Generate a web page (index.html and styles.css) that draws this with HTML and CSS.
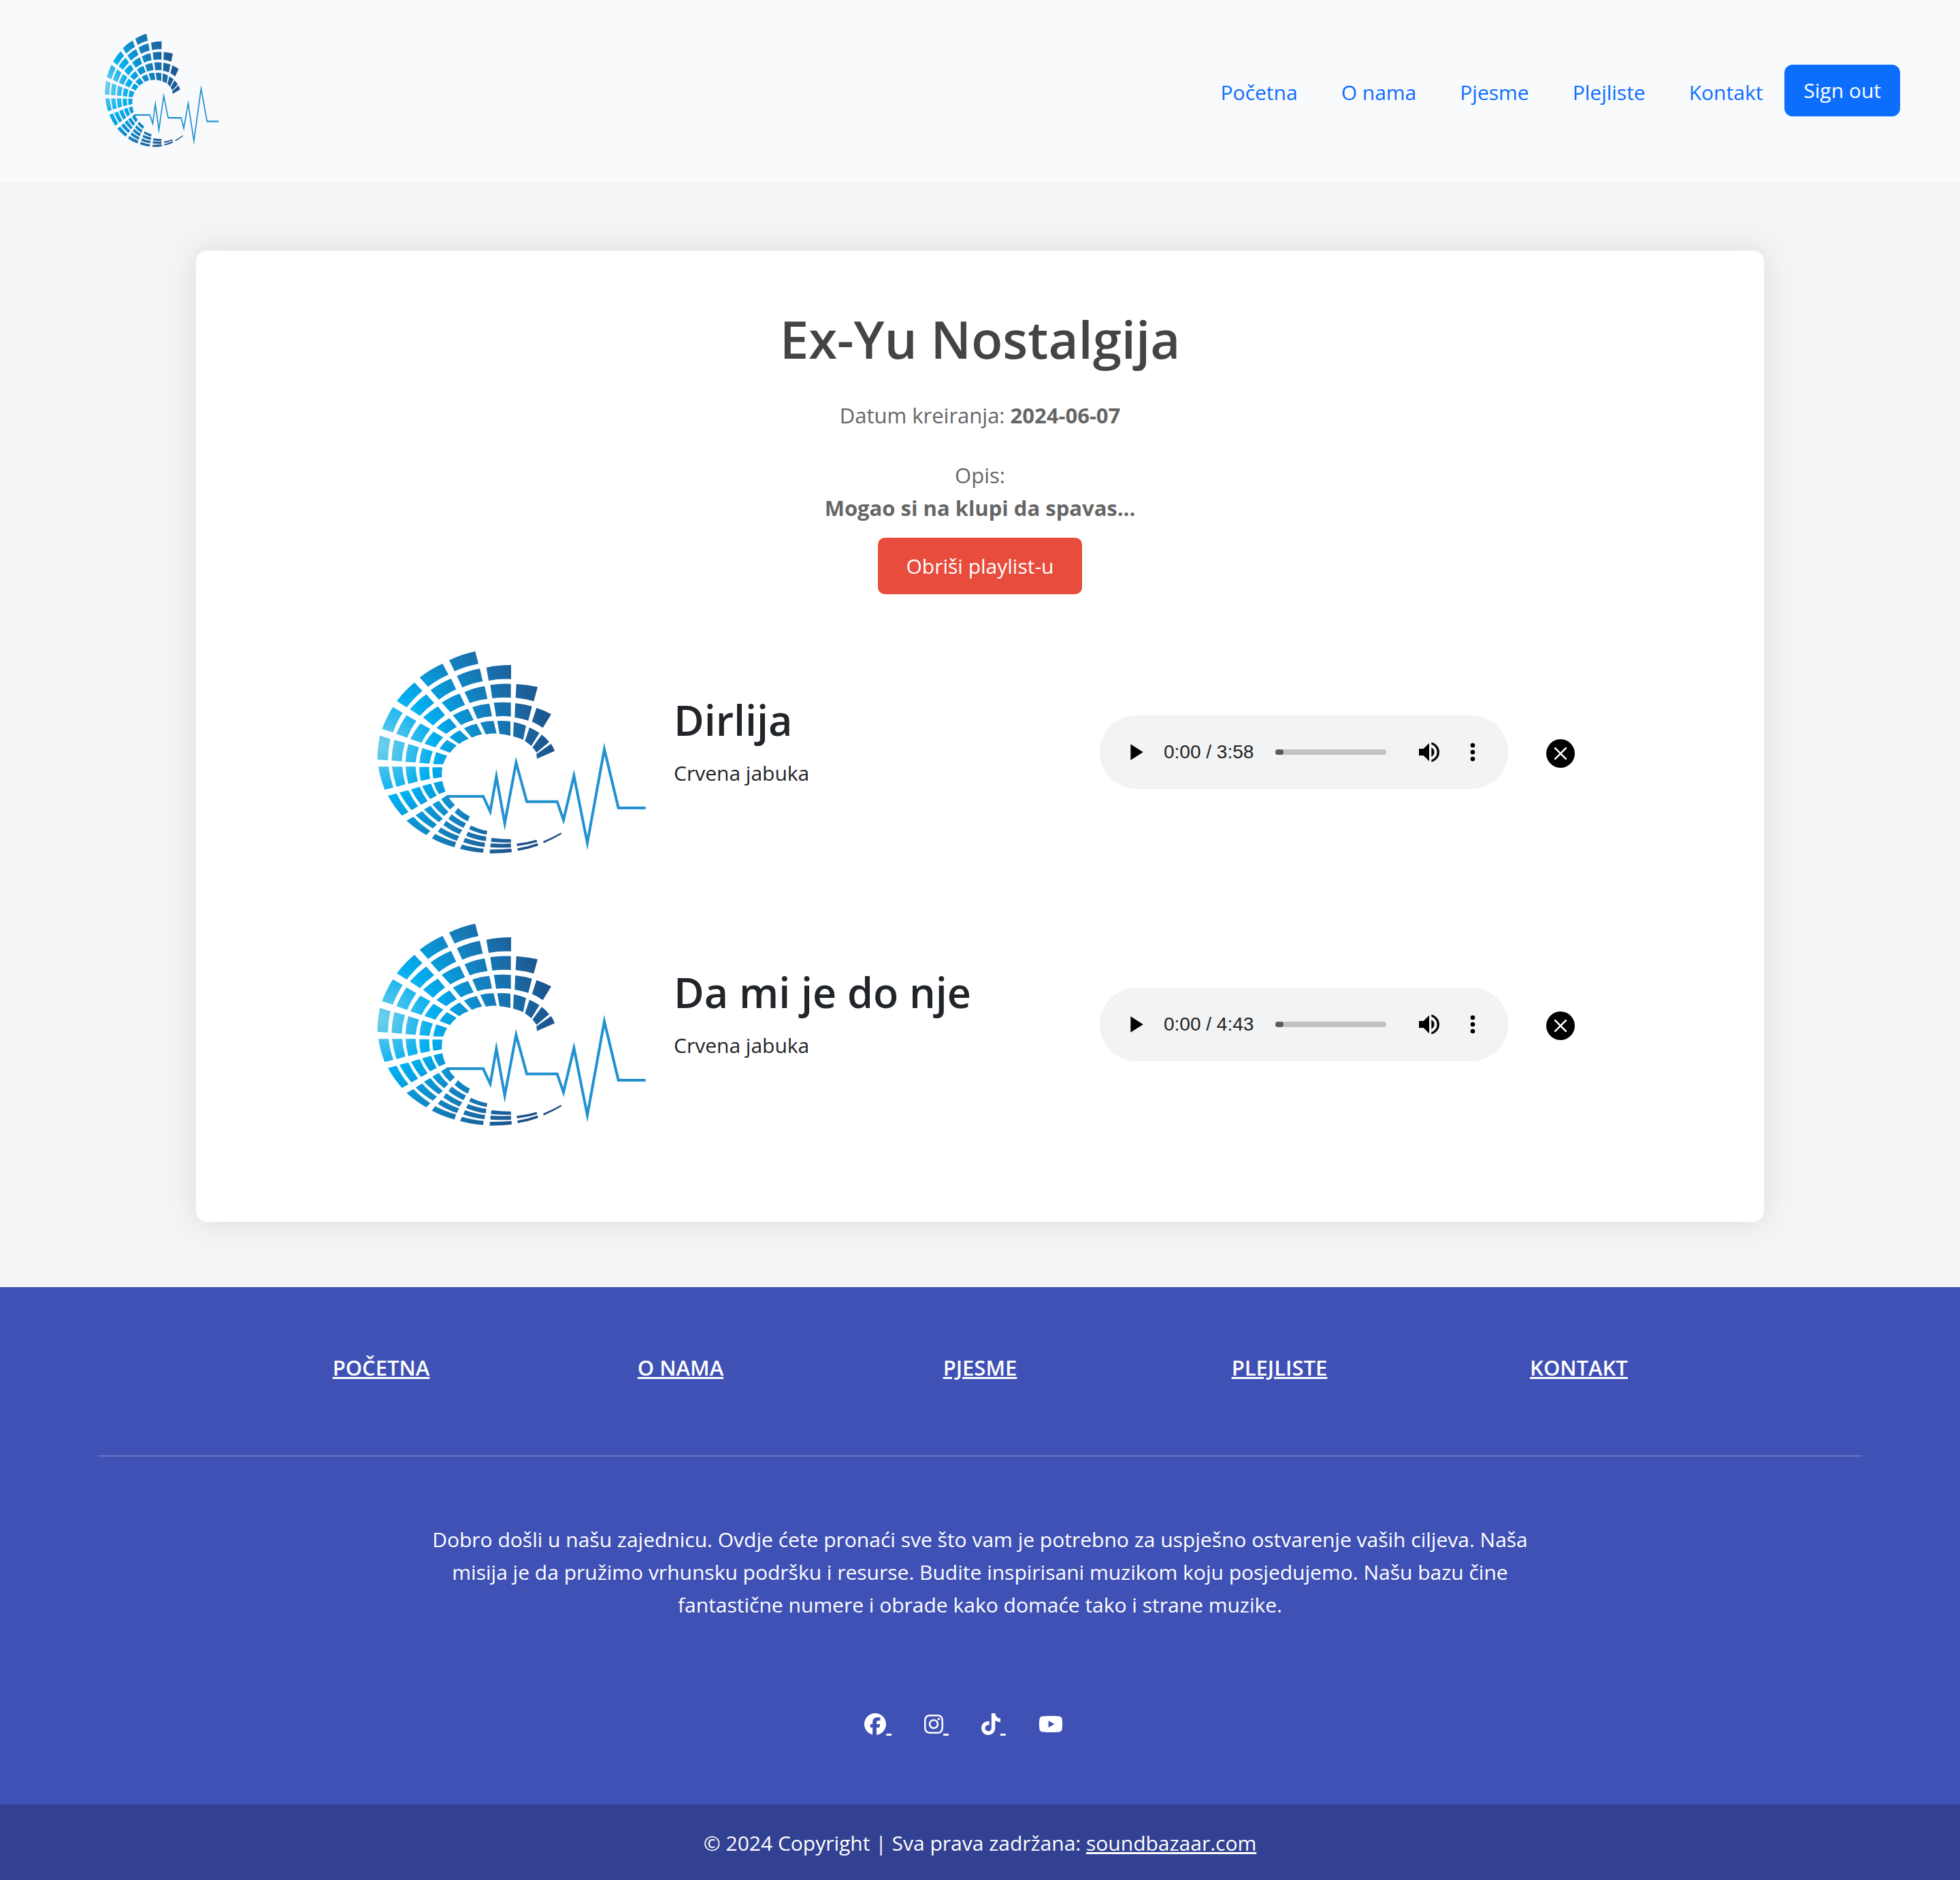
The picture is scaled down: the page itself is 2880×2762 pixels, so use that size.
FILE: index.html
```html
<!DOCTYPE html>
<html lang="bs">
<head>
<meta charset="utf-8">
<meta name="viewport" content="width=device-width, initial-scale=1">
<title>Ex-Yu Nostalgija</title>
<link rel="stylesheet" href="styles.css">
</head>
<body>
<svg class="sprite" width="0" height="0" aria-hidden="true">
  <defs>
    <radialGradient id="tile-fill" gradientUnits="userSpaceOnUse" cx="60" cy="465" r="800">
      <stop offset="0" stop-color="#6fcfea"/>
      <stop offset=".16" stop-color="#38bdee"/>
      <stop offset=".3" stop-color="#00aeef"/>
      <stop offset=".6" stop-color="#147fbd"/>
      <stop offset=".8" stop-color="#1b659f"/>
      <stop offset="1" stop-color="#1d4c88"/>
    </radialGradient>
    <g id="logo">
      <g fill="url(#tile-fill)">
        <path d="M44 528A470 470 0 0 1 55 422L101 437A430 430 0 0 0 90 531ZM106 532A410 410 0 0 1 118 441L165 454A370 370 0 0 0 151 536ZM167 538A350 350 0 0 1 180 459L227 473A310 310 0 0 0 212 541ZM229 542A290 290 0 0 1 241 477L288 491A250 250 0 0 0 273 546ZM290 548A220 220 0 0 1 303 495L351 511A180 180 0 0 0 334 548Z"/>
        <path d="M64 393A470 470 0 0 1 112 296L155 322A430 430 0 0 0 112 408ZM127 415A410 410 0 0 1 172 332L215 357A370 370 0 0 0 175 431ZM189 437A350 350 0 0 1 233 368L277 393A310 310 0 0 0 238 454ZM251 458A290 290 0 0 1 291 404L334 430A250 250 0 0 0 299 474ZM317 480A220 220 0 0 1 350 441L393 466A180 180 0 0 0 364 498Z"/>
        <path d="M129 270A470 470 0 0 1 207 188L242 225A430 430 0 0 0 173 298ZM187 306A410 410 0 0 1 259 240L294 278A370 370 0 0 0 231 335ZM245 342A350 350 0 0 1 310 293L342 332A310 310 0 0 0 289 378ZM304 388A290 290 0 0 1 361 345L394 384A250 250 0 0 0 347 415ZM361 430A220 220 0 0 1 406 398L446 436A180 180 0 0 0 404 459Z"/>
        <path d="M230 166A470 470 0 0 1 331 105L357 154A430 430 0 0 0 267 207ZM278 222A410 410 0 0 1 368 171L391 218A370 370 0 0 0 315 264ZM327 277A350 350 0 0 1 406 237L430 287A310 310 0 0 0 365 319ZM376 333A290 290 0 0 1 443 304L468 353A250 250 0 0 0 412 376ZM425 390A220 220 0 0 1 481 370L505 416A180 180 0 0 0 460 431Z"/>
        <path d="M360 90A470 470 0 0 1 475 51L489 106A430 430 0 0 0 384 139ZM394 159A410 410 0 0 1 495 127L508 183A370 370 0 0 0 418 210ZM428 230A350 350 0 0 1 516 204L529 260A310 310 0 0 0 451 279ZM462 297A290 290 0 0 1 537 281L549 337A250 250 0 0 0 484 349ZM497 365A220 220 0 0 1 556 358L569 413A180 180 0 0 0 522 417Z"/>
        <path d="M524 122A470 470 0 0 1 633 111L633 173A430 430 0 0 0 534 180ZM541 199A410 410 0 0 1 632 194L632 255A370 370 0 0 0 550 258ZM557 277A350 350 0 0 1 632 277L632 338A310 310 0 0 0 567 338ZM572 358A290 290 0 0 1 630 360L630 423A250 250 0 0 0 582 415Z"/>
        <path d="M656 195A470 470 0 0 1 750 208L733 271A430 430 0 0 0 653 256ZM651 280A410 410 0 0 1 725 293L709 356A370 370 0 0 0 649 342ZM645 362A350 350 0 0 1 699 379L686 441A310 310 0 0 0 642 425Z"/>
        <path d="M745 300A350 350 0 0 1 810 328L773 388A310 310 0 0 0 725 361ZM714 386A290 290 0 0 1 758 410L722 468A250 250 0 0 0 694 446ZM768 418A200 200 0 0 1 801 450L745 497A160 160 0 0 0 727 474ZM809 458A120 120 0 0 1 825 490L747 524A80 80 0 0 0 744 504Z"/>
        <path d="M76 661A470 470 0 0 1 48 559L93 559A430 430 0 0 0 114 651ZM128 648A410 410 0 0 1 108 559L153 559A370 370 0 0 0 167 637ZM180 635A350 350 0 0 1 168 559L212 559A310 310 0 0 0 222 624ZM235 622A290 290 0 0 1 228 560L272 560A250 250 0 0 0 276 613ZM290 611A220 220 0 0 1 286 562L330 562A180 180 0 0 0 328 605Z"/>
        <path d="M152 775A470 470 0 0 1 90 687L128 677A430 430 0 0 0 181 759ZM194 751A410 410 0 0 1 141 673L180 663A370 370 0 0 0 223 734ZM236 727A350 350 0 0 1 192 659L230 648A310 310 0 0 0 265 711ZM276 702A290 290 0 0 1 241 644L280 634A250 250 0 0 0 305 687ZM315 680A220 220 0 0 1 291 631L330 622A180 180 0 0 0 344 668Z"/>
        <path d="M259 860A470 470 0 0 1 172 797L202 780A430 430 0 0 0 277 842ZM288 831A410 410 0 0 1 212 773L241 755A370 370 0 0 0 306 814ZM315 803A350 350 0 0 1 249 748L277 731A310 310 0 0 0 332 788ZM338 776A290 290 0 0 1 286 725L314 709A250 250 0 0 0 357 758ZM364 748A220 220 0 0 1 325 702L352 684A180 180 0 0 0 385 728Z"/>
        <path d="M383 914A470 470 0 0 1 284 875L298 855A450 450 0 0 0 391 892ZM394 886A410 410 0 0 1 310 845L324 827A390 390 0 0 0 404 865ZM405 857A350 350 0 0 1 334 817L347 798A330 330 0 0 0 418 838ZM424 829A290 290 0 0 1 357 789L371 769A270 270 0 0 0 434 808ZM442 800A220 220 0 0 1 384 761L399 741A200 200 0 0 0 451 778Z"/>
        <path d="M510 938A470 470 0 0 1 408 921L417 902A450 450 0 0 0 512 920ZM516 913A410 410 0 0 1 422 892L430 873A390 390 0 0 0 518 894ZM521 887A350 350 0 0 1 435 864L443 846A330 330 0 0 0 524 867ZM525 859A290 290 0 0 1 448 835L456 818A270 270 0 0 0 528 842Z"/>
        <path d="M636 936A700 700 0 0 1 538 941L540 924A700 700 0 0 0 634 920ZM633 915A700 700 0 0 1 541 914L543 897A700 700 0 0 0 632 898ZM633 893A700 700 0 0 1 544 890L547 873A700 700 0 0 0 632 879Z"/>
        <path d="M753 907A470 470 0 0 1 662 930L661 919A470 470 0 0 0 749 896ZM748 891A470 470 0 0 1 659 909L658 898A470 470 0 0 0 745 881ZM856 856A600 600 0 0 1 777 896L774 888A600 600 0 0 0 853 850Z"/>
      </g>
      <path d="M350 690H510L541 757L568 603L605 808L655 541L702 713H836L864 794L910 599L969 895L1044 482L1106 741H1226" fill="none" stroke="#2191d0" stroke-width="12" stroke-miterlimit="20"/>
    </g>
  </defs>
</svg>

<header class="site-header">
  <a class="brand" href="#" aria-label="Soundbazaar">
    <svg class="brand-logo" viewBox="0 0 1260 990" preserveAspectRatio="none"><use href="#logo"/></svg>
  </a>
  <nav class="main-nav">
    <a href="#">Početna</a>
    <a href="#">O nama</a>
    <a href="#">Pjesme</a>
    <a href="#">Plejliste</a>
    <a href="#">Kontakt</a>
    <button class="sign-out" type="button">Sign out</button>
  </nav>
</header>

<main class="card">
  <h1 class="title">Ex-Yu Nostalgija</h1>
  <p class="meta">Datum kreiranja: <strong>2024-06-07</strong></p>
  <p class="meta description">Opis:<br><strong>Mogao si na klupi da spavas...</strong></p>
  <button class="delete" type="button">Obriši playlist-u</button>

  <ul class="songs">
    <li class="song">
      <svg class="cover" viewBox="0 0 1260 990" aria-hidden="true"><use href="#logo"/></svg>
      <div class="song-text">
        <h2>Dirlija</h2>
        <p>Crvena jabuka</p>
      </div>
      <div class="player">
        <button type="button" aria-label="Play"><svg viewBox="0 0 24 24"><path d="M8 5v14l11-7z"/></svg></button>
        <span class="time">0:00 / 3:58</span>
        <input class="seek" type="range" min="0" max="238" value="0" aria-label="Seek">
        <button class="volume" type="button" aria-label="Mute"><svg viewBox="0 0 24 24"><path d="M3 9v6h4l5 5V4L7 9H3zm13.5 3A4.5 4.5 0 0 0 14 7.97v8.05A4.5 4.5 0 0 0 16.500 12zM14 3.230v2.060a7 7 0 0 1 0 13.420v2.060a9 9 0 0 0 0-17.540z"/></svg></button>
        <button class="more" type="button" aria-label="More options"><svg viewBox="0 0 24 24"><path d="M12 8a2 2 0 1 0 0-4 2 2 0 0 0 0 4zm0 2a2 2 0 1 0 0 4 2 2 0 0 0 0-4zm0 6a2 2 0 1 0 0 4 2 2 0 0 0 0-4z"/></svg></button>
      </div>
      <button class="remove" type="button" aria-label="Ukloni pjesmu"><svg viewBox="0 0 16 16"><circle cx="8" cy="8" r="8"/><path d="M5 5l6 6M11 5l-6 6"/></svg></button>
    </li>
    <li class="song">
      <svg class="cover" viewBox="0 0 1260 990" aria-hidden="true"><use href="#logo"/></svg>
      <div class="song-text">
        <h2>Da mi je do nje</h2>
        <p>Crvena jabuka</p>
      </div>
      <div class="player">
        <button type="button" aria-label="Play"><svg viewBox="0 0 24 24"><path d="M8 5v14l11-7z"/></svg></button>
        <span class="time">0:00 / 4:43</span>
        <input class="seek" type="range" min="0" max="283" value="0" aria-label="Seek">
        <button class="volume" type="button" aria-label="Mute"><svg viewBox="0 0 24 24"><path d="M3 9v6h4l5 5V4L7 9H3zm13.5 3A4.5 4.5 0 0 0 14 7.97v8.05A4.5 4.5 0 0 0 16.500 12zM14 3.230v2.060a7 7 0 0 1 0 13.420v2.060a9 9 0 0 0 0-17.540z"/></svg></button>
        <button class="more" type="button" aria-label="More options"><svg viewBox="0 0 24 24"><path d="M12 8a2 2 0 1 0 0-4 2 2 0 0 0 0 4zm0 2a2 2 0 1 0 0 4 2 2 0 0 0 0-4zm0 6a2 2 0 1 0 0 4 2 2 0 0 0 0-4z"/></svg></button>
      </div>
      <button class="remove" type="button" aria-label="Ukloni pjesmu"><svg viewBox="0 0 16 16"><circle cx="8" cy="8" r="8"/><path d="M5 5l6 6M11 5l-6 6"/></svg></button>
    </li>
  </ul>
</main>

<footer class="site-footer">
  <div class="footer-main">
    <nav class="footer-nav">
      <a href="#">Početna</a>
      <a href="#">O nama</a>
      <a href="#">Pjesme</a>
      <a href="#">Plejliste</a>
      <a href="#">Kontakt</a>
    </nav>
    <hr>
    <p class="about">Dobro došli u našu zajednicu. Ovdje ćete pronaći sve što vam je potrebno za uspješno ostvarenje vaših ciljeva. Naša misija je da pružimo vrhunsku podršku i resurse. Budite inspirisani muzikom koju posjedujemo. Našu bazu čine fantastične numere i obrade kako domaće tako i strane muzike.</p>
    <div class="social">
      <a href="#" aria-label="Facebook"><svg viewBox="0 0 512 512"><path d="M512 256C512 114.600 397.400 0 256 0S0 114.600 0 256C0 376 82.700 476.800 194.200 504.500V334.200H141.400V256h52.800V222.300c0-87.100 39.400-127.500 125-127.500c16.200 0 44.200 3.200 55.700 6.400V172c-6-.6-16.500-1-29.600-1c-42 0-58.200 15.900-58.200 57.200V256h83.600l-14.400 78.200H287V510.100C413.800 494.800 512 386.900 512 256z"/></svg>&nbsp;</a>
      <a href="#" aria-label="Instagram"><svg class="narrow" viewBox="0 0 448 512"><path d="M224.100 141c-63.600 0-114.900 51.300-114.900 114.900s51.300 114.900 114.900 114.900S339 319.500 339 255.900 287.700 141 224.100 141zm0 189.600c-41.100 0-74.700-33.500-74.700-74.700s33.500-74.700 74.700-74.700 74.700 33.500 74.700 74.700-33.600 74.700-74.700 74.700zm146.400-194.300c0 14.900-12 26.800-26.800 26.800-14.900 0-26.800-12-26.800-26.800s12-26.800 26.800-26.800 26.800 12 26.800 26.800zm76.100 27.200c-1.700-35.900-9.900-67.700-36.200-93.900-26.200-26.200-58-34.400-93.900-36.200-37-2.100-147.900-2.100-184.900 0-35.800 1.700-67.600 9.900-93.900 36.100s-34.400 58-36.200 93.900c-2.100 37-2.100 147.900 0 184.900 1.700 35.900 9.900 67.700 36.200 93.900s58 34.400 93.900 36.200c37 2.100 147.900 2.100 184.900 0 35.900-1.700 67.700-9.900 93.900-36.200 26.200-26.200 34.400-58 36.200-93.900 2.100-37 2.100-147.800 0-184.800zM398.800 388c-7.800 19.600-22.900 34.700-42.600 42.600-29.500 11.700-99.500 9-132.100 9s-102.700 2.600-132.100-9c-19.600-7.800-34.700-22.900-42.600-42.600-11.700-29.500-9-99.500-9-132.100s-2.600-102.700 9-132.100c7.800-19.600 22.900-34.700 42.600-42.600 29.500-11.700 99.500-9 132.100-9s102.700-2.600 132.100 9c19.600 7.800 34.700 22.900 42.600 42.600 11.700 29.500 9 99.500 9 132.100s2.700 102.700-9 132.100z"/></svg>&nbsp;</a>
      <a href="#" aria-label="TikTok"><svg class="narrow" viewBox="0 0 448 512"><path d="M448 209.900a210.100 210.100 0 0 1-122.800-39.300V349.400A162.600 162.600 0 1 1 185 188.300V278.200a74.600 74.600 0 1 0 52.200 71.200V0l88 0a121.200 121.200 0 0 0 1.900 22.200h0A122.200 122.200 0 0 0 381 102.400a121.400 121.400 0 0 0 67 20.100z"/></svg>&nbsp;</a>
      <a href="#" aria-label="YouTube"><svg class="wide" viewBox="0 0 576 512"><path d="M549.700 124.100c-6.300-23.700-24.800-42.300-48.300-48.600C458.800 64 288 64 288 64S117.200 64 74.600 75.500c-23.500 6.300-42 24.900-48.300 48.600-11.400 42.900-11.400 132.300-11.400 132.300s0 89.400 11.400 132.300c6.300 23.700 24.800 41.500 48.300 47.800C117.200 448 288 448 288 448s170.800 0 213.400-11.500c23.500-6.300 42-24.200 48.300-47.800 11.400-42.900 11.400-132.300 11.400-132.300s0-89.400-11.400-132.300zm-317.500 213.500V175.200l142.700 81.200-142.700 81.200z"/></svg></a>
    </div>
  </div>
  <div class="copyright">© 2024 Copyright | Sva prava zadržana: <a href="#">soundbazaar.com</a></div>
</footer>
</body>
</html>
```

FILE: styles.css
```css
* {
  box-sizing: border-box;
}

body {
  margin: 0;
  background: #f4f4f4;
  color: #212529;
  font-family: "Open Sans", "Noto Sans", sans-serif;
  font-size: 30px;
  line-height: 48px;
}

h1, h2, p, ul {
  margin: 0;
  padding: 0;
}

button {
  border: 0;
  padding: 0;
  background: none;
  font: inherit;
  cursor: pointer;
}

svg {
  display: block;
}

.sprite {
  position: absolute;
}

/* Header */

.site-header {
  display: flex;
  align-items: center;
  justify-content: space-between;
  padding: 40px 88px 43px 148px;
  background: #f8fafc;
}

.brand-logo {
  width: 178px;
  height: 185px;
}

.main-nav {
  display: flex;
  align-items: center;
  gap: 64px;
}

.main-nav a {
  padding-top: 6px;
  color: #0d6efd;
  text-decoration: none;
}

.sign-out {
  height: 76px;
  margin-left: -32px;
  padding: 0 28px;
  border-radius: 12px;
  background: #0d6efd;
  color: #fff;
}

/* Playlist card */

.card {
  width: 80%;
  margin: 100px auto 96px;
  padding: 78px 0 90px;
  border-radius: 16px;
  background: #fff;
  box-shadow: 0 0 40px rgba(0, 0, 0, .1);
  text-align: center;
}

.title {
  color: #444;
  font-size: 76px;
  font-weight: 600;
  line-height: 104px;
}

.meta {
  margin-top: 36px;
  color: #666;
  font-size: 31px;
}

.description {
  margin-top: 40px;
}

.delete {
  display: block;
  height: 83px;
  margin: 20px auto 0;
  padding: 0 41px;
  border-radius: 10px;
  background: #e74c3c;
  color: #fff;
}

.songs {
  padding: 32px 278px 0 252px;
  list-style: none;
  text-align: left;
}

.song {
  display: grid;
  grid-template-columns: 420px 1fr 600px 98px;
  align-items: center;
  height: 400px;
}

.cover {
  width: 420px;
  height: 330px;
}

.song-text {
  padding: 0 0 30px 30px;
}

.song-text h2 {
  font-size: 61px;
  font-weight: 600;
  line-height: 76px;
}

.song-text p {
  margin-top: 16px;
}

.player {
  display: flex;
  align-items: center;
  height: 108px;
  padding: 0 32px;
  border-radius: 54px;
  background: #f1f3f4;
}

.player button,
.player svg {
  width: 40px;
  height: 40px;
}

.time {
  margin-left: 22px;
  color: #222;
  font-family: "Liberation Sans", sans-serif;
  font-size: 28px;
  white-space: nowrap;
}

.seek {
  flex: 1;
  min-width: 0;
  height: 8px;
  margin: 0 43px 0 32px;
  border-radius: 4px;
  background: #c1c2c3;
  appearance: none;
}

.seek::-webkit-slider-thumb {
  width: 12px;
  height: 8px;
  border-radius: 4px;
  background: #5a5a5a;
  appearance: none;
}

.more {
  margin-left: 24px;
}

.remove {
  padding-top: 4px;
  justify-self: end;
}

.remove svg {
  width: 42px;
  height: 42px;
}

.remove path {
  fill: none;
  stroke: #fff;
  stroke-linecap: round;
}

/* Footer */

.site-footer {
  background: #3f51b5;
  color: #fff;
  text-align: center;
}

.site-footer a {
  color: #fff;
}

.footer-main {
  padding: 94px 5% 93px;
}

.footer-nav {
  display: grid;
  grid-template-columns: repeat(5, 440px);
  justify-content: center;
  font-size: 31px;
  font-weight: 600;
  text-transform: uppercase;
}

hr {
  height: 2px;
  margin: 105px 0 98px;
  border: 0;
  background: #6674c4;
}

.about {
  max-width: 1680px;
  margin: 0 auto;
}

.social {
  display: flex;
  justify-content: center;
  margin-top: 128px;
}

.social a {
  margin-right: 48px;
}

.social svg {
  display: inline-block;
  width: 32px;
  height: 32px;
  vertical-align: -4px;
  fill: currentColor;
}

.social .narrow {
  width: 28px;
}

.social .wide {
  width: 36px;
}

.copyright {
  padding: 33px 32px 30px;
  background: #324191;
}
```
